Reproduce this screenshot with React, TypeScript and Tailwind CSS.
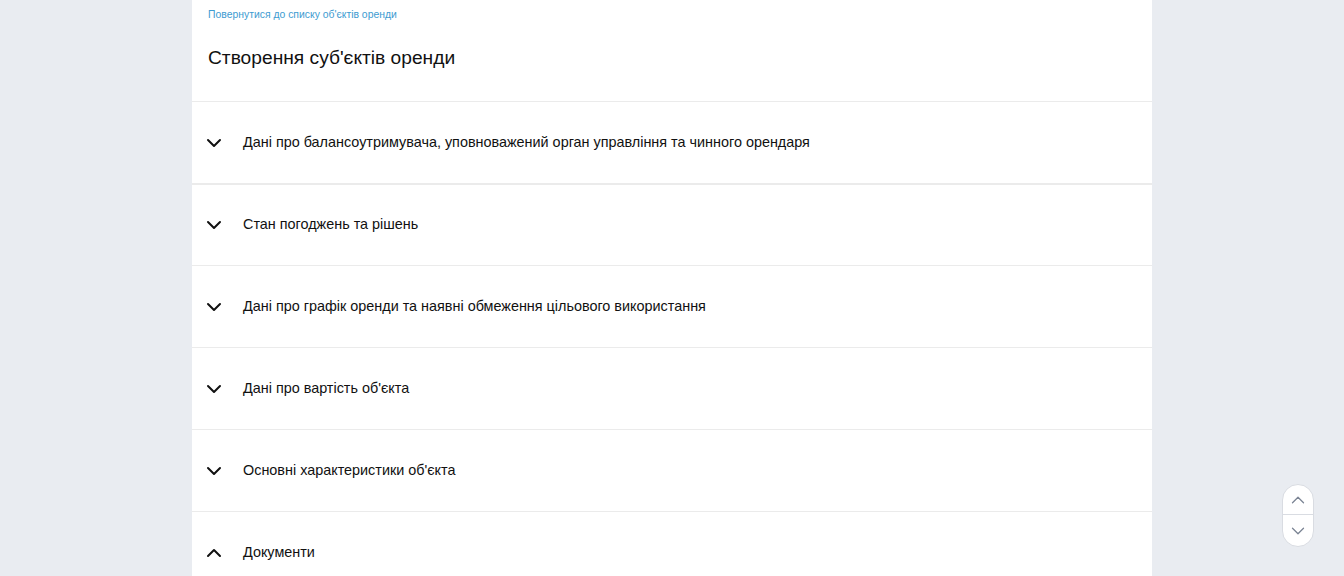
import { ChevronDown, ChevronUp } from 'lucide-react'

const sections = [
  { title: 'Дані про балансоутримувача, уповноважений орган управління та чинного орендаря', open: false, thick: false },
  { title: 'Стан погоджень та рішень', open: false, thick: true },
  { title: 'Дані про графік оренди та наявні обмеження цільового використання', open: false, thick: false },
  { title: "Дані про вартість об'єкта", open: false, thick: false },
  { title: "Основні характеристики об'єкта", open: false, thick: false },
  { title: 'Документи', open: true, thick: false },
]

export default function App() {
  return (
    <div
      className="relative h-[576px] w-full overflow-hidden bg-[#e9ecf1]"
      style={{ fontFamily: '"Liberation Sans", Arial, sans-serif' }}
    >
      <div className="mx-auto w-[960px] bg-white">
        <div className="px-4 pt-[9px]">
          <a className="block text-[10.4px] leading-[12px] text-[#3d9bd1]">Повернутися до списку об'єктів оренди</a>
          <h1 className="mt-[25px] pb-[31px] text-[19.2px] leading-[24px] text-[#111]">Створення суб'єктів оренди</h1>
        </div>
        {sections.map((s, i) => (
          <div
            key={i}
            className={`flex h-[82px] items-center border-[#ebebeb] pl-[10px] pr-4 ${s.thick ? 'border-t-2' : 'border-t'}`}
          >
            <div className="flex w-[41px] shrink-0 items-center">
              {s.open ? (
                <ChevronUp size={24} strokeWidth={2} className="text-[#111]" />
              ) : (
                <ChevronDown size={24} strokeWidth={2} className="text-[#111]" />
              )}
            </div>
            <span className="text-[14.4px] text-[#111]">{s.title}</span>
          </div>
        ))}
      </div>

      {/* scroll buttons */}
      <div className="absolute left-[1282px] top-[484px] flex w-[32px] flex-col overflow-hidden rounded-full border border-[#d9dce2] bg-white">
        <button className="flex h-[30px] items-center justify-center border-b border-[#d9dce2] text-[#7b8494]">
          <ChevronUp size={22} strokeWidth={1.4} />
        </button>
        <button className="flex h-[31px] items-center justify-center text-[#7b8494]">
          <ChevronDown size={22} strokeWidth={1.4} />
        </button>
      </div>
    </div>
  )
}
